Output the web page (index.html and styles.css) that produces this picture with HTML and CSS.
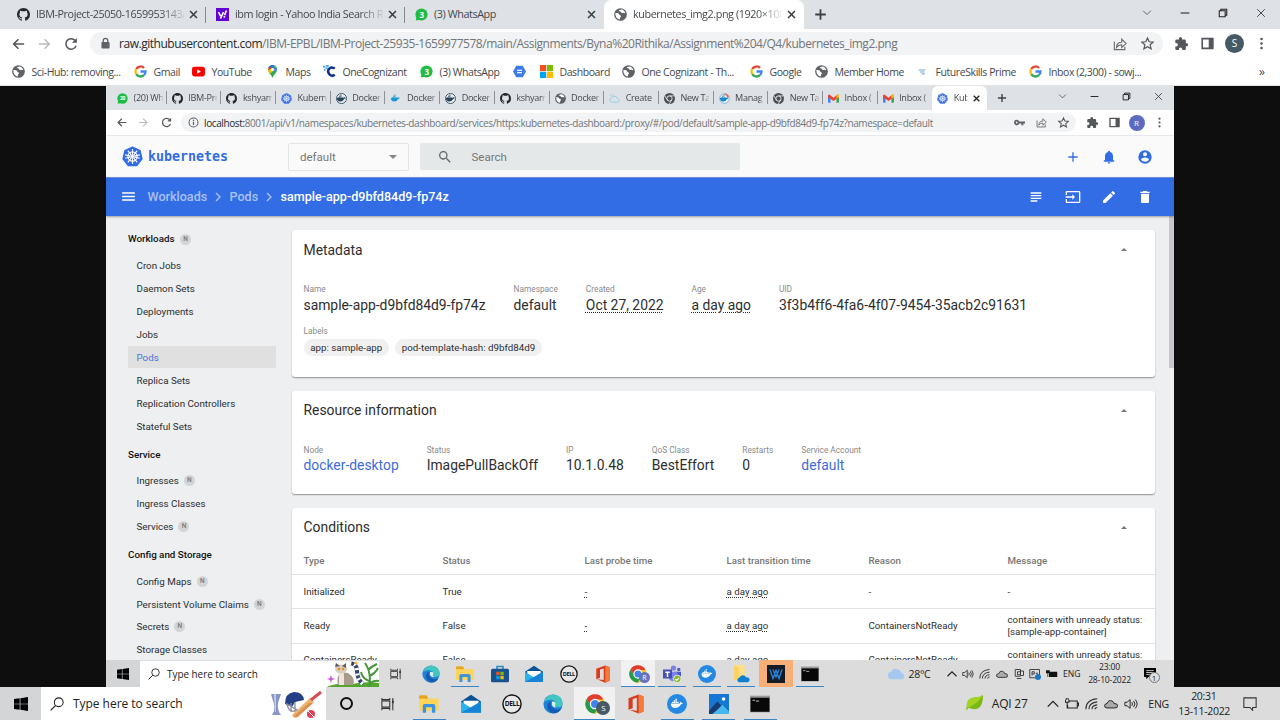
FILE: index.html
```html
<!DOCTYPE html>
<html lang="en">
<head>
<meta charset="utf-8">
<title>kubernetes_img2.png</title>
<link rel="stylesheet" href="styles.css">
</head>
<body>
<svg class="sprite" xmlns="http://www.w3.org/2000/svg">
<symbol id="github" viewBox="0 0 16 16"><path fill="#24292e" d="M8 0C3.58 0 0 3.58 0 8c0 3.54 2.29 6.53 5.47 7.59.4.07.55-.17.55-.38 0-.19-.01-.82-.01-1.49-2.01.37-2.53-.49-2.69-.94-.09-.23-.48-.94-.82-1.13-.28-.15-.68-.52-.01-.53.63-.01 1.08.58 1.23.82.72 1.21 1.87.87 2.33.66.07-.52.28-.87.51-1.07-1.78-.2-3.64-.89-3.64-3.95 0-.87.31-1.59.82-2.15-.08-.2-.36-1.02.08-2.12 0 0 .67-.21 2.2.82a7.6 7.6 0 0 1 4 0c1.53-1.04 2.2-.82 2.2-.82.44 1.1.16 1.92.08 2.12.51.56.82 1.27.82 2.15 0 3.07-1.87 3.75-3.65 3.95.29.25.54.73.54 1.48 0 1.07-.01 1.93-.01 2.2 0 .21.15.46.55.38A8 8 0 0 0 16 8c0-4.42-3.58-8-8-8z"/></symbol>
<symbol id="globe" viewBox="0 0 16 16"><circle cx="8" cy="8" r="7.8" fill="#5f6368"/><path fill="#fff" d="M1.700 6c2 .2 3.200-.2 4 .8.800 1 .3 1.600 1.800 2 1.600.5 1.300 1.800.5 2.300-.8.6-.4 1.900-1 2.900C3.800 13.500 1.500 10.500 1.700 6zM9 1.800c-1.500.6-3 .6-3 1.700 0 1 2.300.4 2.500 1.500.2 1 1.300 1.500 2.300 1 1.200-.5 1.700.5 3 .3C13.400 3.800 11.600 2 9 1.800z"/></symbol>
<symbol id="yahoo" viewBox="0 0 16 16"><path fill="#5f01d1" d="M0 0h16v16H0z"/><path fill="none" stroke="#fff" stroke-width="2" d="M3 5l2.700 5M9.200 5l-3.700 8M12.800 3l-2.300 6"/><circle cx="10.300" cy="10.900" r="1.200" fill="#fff"/></symbol>
<symbol id="wa" viewBox="0 0 16 16"><circle cx="8" cy="8" r="7.500" fill="#1fbc43"/><path fill="#1fbc43" d="M1 15.500l1-5 4 4z"/></symbol>
<symbol id="google" viewBox="0 0 16 16"><g fill="none" stroke-width="2.800"><path stroke="#ea4335" d="M2.700 5A6 6 0 0 1 12.300 3.600"/><path stroke="#fbbc05" d="M2.800 11.200A6.200 6.200 0 0 1 2.700 5"/><path stroke="#34a853" d="M12.200 12.400A6 6 0 0 1 2.800 11.200"/><path stroke="#4285f4" d="M8 8h6.200q0 2.900-2 4.400"/></g></symbol>
<symbol id="youtube" viewBox="0 0 16 12"><rect width="16" height="12" rx="3" fill="#f00"/><path fill="#fff" d="M6.300 3.300v5.400L11 6z"/></symbol>
<symbol id="maps" viewBox="0 0 16 16"><path fill="#34a853" d="M8 16C7 12 2.500 10 2.500 5.500a5.500 5.500 0 0 1 11 0C13.500 10 9 12 8 16z"/><path fill="#4285f4" d="M8 5.500l4-3.800q1.500 1.500 1.500 4L9 8.500z"/><path fill="#1a73e8" d="M4 2A5.500 5.500 0 0 1 10 .4L6.200 5z"/><path fill="#ea4335" d="M2.600 6.500Q2.200 3.500 4 1.900L7 4.400z"/><path fill="#fbbc05" d="M2.600 6.300L6 5l3 2-4.500 4z"/><circle cx="8" cy="5.600" r="2" fill="#fff"/></symbol>
<symbol id="cog" viewBox="0 0 16 16"><path fill="none" stroke="#102c8c" stroke-width="3" d="M14.500 4.500Q11 1.700 8 4.200 4.500 7.500 8 11.500 11 14.500 14.500 12"/><path fill="#3ba0e8" d="M0 1h3v2H0zM3 3h3v2H3zM4 0h3v2H4zM1 5h2v2H1z"/></symbol>
<symbol id="hex" viewBox="0 0 16 16"><path fill="#3b7bea" d="M4 1h8l4 7-4 7H4L0 8z"/><path stroke="#fff" stroke-width="1.500" d="M5 6.700h6M5 9.500h6"/></symbol>
<symbol id="ms" viewBox="0 0 16 16"><path fill="#f25022" d="M0 0h7.600v7.600H0z"/><path fill="#7fba00" d="M8.400 0H16v7.600H8.400z"/><path fill="#00a4ef" d="M0 8.400h7.600V16H0z"/><path fill="#ffb900" d="M8.400 8.400H16V16H8.400z"/></symbol>
<symbol id="future" viewBox="0 0 16 16"><path stroke="#72a5d8" stroke-width="2" d="M1 4h14M4 8h9M7 12h7"/></symbol>
<symbol id="x" viewBox="0 0 16 16"><path fill="none" stroke="currentColor" stroke-width="2.300" d="M3 3l10 10M13 3L3 13"/></symbol>
<symbol id="xthin" viewBox="0 0 16 16"><path fill="none" stroke="#333" stroke-width="1.400" d="M2 2l12 12M14 2L2 14"/></symbol>
<symbol id="plus" viewBox="0 0 16 16"><path fill="none" stroke="currentColor" stroke-width="2.200" d="M8 1.500v13M1.500 8h13"/></symbol>
<symbol id="plusthin" viewBox="0 0 24 24"><path fill="currentColor" d="M19 13h-6v6h-2v-6H5v-2h6V5h2v6h6z"/></symbol>
<symbol id="down" viewBox="0 0 16 16"><path fill="none" stroke="#555" stroke-width="1.500" d="M2 4.500l6 6 6-6"/></symbol>
<symbol id="up" viewBox="0 0 16 16"><path fill="none" stroke="#222" stroke-width="1.500" d="M2 11l6-6 6 6"/></symbol>
<symbol id="min" viewBox="0 0 16 16"><path stroke="#222" stroke-width="1.700" d="M1 8h14"/></symbol>
<symbol id="max" viewBox="0 0 16 16"><path fill="none" stroke="#222" stroke-width="1.700" d="M2 4.500h9.500V14H2zM4.500 4V2H14v9.500h-2"/></symbol>
<symbol id="back" viewBox="0 0 16 16"><path fill="none" stroke="currentColor" stroke-width="1.800" d="M15 8H3M8.500 2.500L3 8l5.500 5.500"/></symbol>
<symbol id="fwd" viewBox="0 0 16 16"><path fill="none" stroke="currentColor" stroke-width="1.600" d="M1 8h12M7.500 2.500L13 8l-5.500 5.500"/></symbol>
<symbol id="reload" viewBox="0 0 16 16"><path fill="none" stroke="#54575b" stroke-width="1.800" d="M13.800 10A6 6 0 1 1 12.700 4"/><path fill="#54575b" d="M14.700 1v5.700H9z"/></symbol>
<symbol id="lock" viewBox="0 0 16 16"><rect x="3" y="6.300" width="10" height="8" rx="1" fill="#5f6368"/><path fill="none" stroke="#5f6368" stroke-width="1.600" d="M5.200 7V4.500a2.800 2.800 0 0 1 5.600 0V7"/></symbol>
<symbol id="info" viewBox="0 0 16 16"><circle cx="8" cy="8" r="6.500" fill="none" stroke="#5f6368" stroke-width="1.500"/><path stroke="#5f6368" stroke-width="1.800" d="M8 7v4.500M8 4v1.700"/></symbol>
<symbol id="share" viewBox="0 0 16 16"><path fill="none" stroke="#6a6d71" stroke-width="1.300" d="M1.500 5v9.500h12V11M4 12q0-6 6-6V2.500l5 5-5 4.500V8.800Q6 8.800 4 12z"/></symbol>
<symbol id="star" viewBox="0 0 16 16"><path fill="none" stroke="#54575b" stroke-width="1.500" d="M8 1.300l2 4.600 5 .4-3.800 3.300 1.200 4.900L8 11.900l-4.400 2.600 1.200-4.900L1 6.300l5-.4z"/></symbol>
<symbol id="puzzle" viewBox="2 1 20 21"><path fill="#54575b" d="M20.500 11H19V7a2 2 0 0 0-2-2h-4V3.500a2.500 2.500 0 0 0-5 0V5H4a2 2 0 0 0-2 2v3.800h1.500a2.700 2.700 0 0 1 0 5.400H2V20a2 2 0 0 0 2 2h3.800v-1.500a2.700 2.700 0 0 1 5.400 0V22H17a2 2 0 0 0 2-2v-4h1.500a2.500 2.500 0 0 0 0-5z"/></symbol>
<symbol id="panel" viewBox="0 0 16 16"><path fill="none" stroke="#54575b" stroke-width="2" d="M1.500 2h13v12h-13z"/><path fill="#54575b" d="M9.500 2H15v12H9.500z"/></symbol>
<symbol id="dots" viewBox="0 0 16 16"><g fill="#54575b"><circle cx="8" cy="2.500" r="1.600"/><circle cx="8" cy="8" r="1.600"/><circle cx="8" cy="13.500" r="1.600"/></g></symbol>
<symbol id="key" viewBox="0 0 16 16"><path fill="#5f6368" fill-rule="evenodd" d="M4 4a4 4 0 1 0 3.700 5.500h3V12h3V9.500H16v-3H7.700A4 4 0 0 0 4 4zm0 2.700a1.300 1.300 0 1 1 0 2.600 1.300 1.300 0 0 1 0-2.600z"/></symbol>
<symbol id="k8s" viewBox="0 0 32 32"><path fill="#326ce5" stroke="#326ce5" stroke-width="2" stroke-linejoin="round" d="M16 1.500L27.500 7l3 12.500-8 10.500h-13l-8-10.500L4.500 7z"/><g fill="none" stroke="#fff" stroke-width="1.700"><circle cx="16" cy="16" r="7"/><path d="M16 4.500v9M16 18.500v9M4.800 13.500l8.500 1.900M18.700 16.700l8.500 2M8.800 25l5.400-7M17.700 14l5.500-7M23.200 25l-5.400-7M14.300 14L8.800 7M27.200 13.500l-8.500 1.900M13.300 16.700l-8.500 2"/></g><circle cx="16" cy="16" r="2.500" fill="#fff"/></symbol>
<symbol id="whale" viewBox="0 0 24 24"><path d="M2 11h14.500q1-.6 0-3 1.500.2 2.300 2 1.700-.3 2.700.7-1 1.800-3.200 1.700Q15.500 18.500 9 18.500 2 18 2 11zM4 8.500h2.300v2H4zM6.800 8.500h2.300v2H6.800zM9.600 8.500h2.300v2H9.600zM12.400 8.500h2.300v2h-2.300zM6.800 6h2.300v2H6.800zM9.600 6h2.300v2H9.600zM9.600 3.500h2.300v2H9.600z" fill="currentColor"/></symbol>
<symbol id="dockdark" viewBox="0 0 24 24"><circle cx="12" cy="12" r="11" fill="#e9edf1" stroke="#38505f" stroke-width="2"/><g color="#27465a"><use href="#whale"/></g></symbol>
<symbol id="dockblue" viewBox="0 0 24 24"><circle cx="12" cy="12" r="12" fill="#2489e4"/><g color="#fff"><use href="#whale" x="3" y="3" width="18" height="18"/></g></symbol>
<symbol id="docklight" viewBox="0 0 24 24"><circle cx="12" cy="12" r="10.500" fill="#eef5fa" stroke="#78b6dc" stroke-width="2"/><path fill="#eb6b52" d="M12 1a11 11 0 0 1 10 7l-4 1q-2-4-6-5z"/><g color="#1688d0"><use href="#whale"/></g></symbol>
<symbol id="cloud" viewBox="0 0 24 24"><path d="M6 19a5 5 0 0 1-.5-9.900A7 7 0 0 1 18.700 11 4 4 0 0 1 19 19z"/></symbol>
<symbol id="create" viewBox="0 0 24 24"><path fill="none" stroke="#93cfe9" stroke-width="2" d="M6 20a4 4 0 0 1 0-9 7 7 0 0 1 13 2 3.500 3.500 0 0 1 0 7zM2 5l5 3M9 2v4"/></symbol>
<symbol id="chromedark" viewBox="0 0 16 16"><circle cx="8" cy="8" r="8" fill="#4c5055"/><circle cx="8" cy="8" r="3.800" fill="#4c5055" stroke="#fff" stroke-width="1.200"/><path fill="none" stroke="#fff" d="M8 4.200h7.300M4.700 10L1.200 4M11.200 10l-3.500 6"/></symbol>
<symbol id="gmail" viewBox="0 0 16 12"><path fill="#4285f4" d="M0 1.500L3.700 4v8H1q-1 0-1-1z"/><path fill="#34a853" d="M16 1.500L12.300 4v8H15q1 0 1-1z"/><path fill="#ea4335" d="M0 1.500Q1-.5 3 1l5 4 5-4q2-1.500 3 .5V4L8 9.500 0 4z"/><path fill="#fbbc04" d="M12.300 1.500Q15-.8 16 1.500V4l-3.700 2z"/></symbol>
<symbol id="bell" viewBox="0 0 24 24"><path fill="#326de6" d="M12 22a2 2 0 0 0 2-2h-4a2 2 0 0 0 2 2zm6-6v-5c0-3.070-1.640-5.640-4.500-6.320V4a1.500 1.500 0 0 0-3 0v.68C7.630 5.360 6 7.920 6 11v5l-2 2v1h16v-1z"/></symbol>
<symbol id="user" viewBox="0 0 24 24"><path fill="#326de6" d="M12 2a10 10 0 1 0 0 20 10 10 0 0 0 0-20zm0 3a3 3 0 1 1 0 6 3 3 0 0 1 0-6zm0 14.200a7.200 7.200 0 0 1-6-3.220c.03-1.990 4-3.080 6-3.080s5.970 1.090 6 3.080a7.200 7.200 0 0 1-6 3.220z"/></symbol>
<symbol id="search" viewBox="0 0 24 24"><path fill="#666" d="M15.500 14h-.79l-.28-.27a6.500 6.500 0 1 0-.7.700l.27.28v.79l5 4.990L20.490 19zm-6 0a4.500 4.500 0 1 1 0-9 4.500 4.500 0 0 1 0 9z"/></symbol>
<symbol id="menu" viewBox="0 0 24 24"><path fill="#fff" d="M3 18h18v-2H3zm0-5h18v-2H3zm0-7v2h18V6z"/></symbol>
<symbol id="logs" viewBox="0 0 24 24"><path fill="#fff" d="M14 17H4v2h10zm6-8H4v2h16zM4 15h16v-2H4zM4 5v2h16V5z"/></symbol>
<symbol id="exec" viewBox="0 0 24 24"><path fill="#fff" d="M21 3.010H3c-1.100 0-2 .9-2 2V9h2V4.990h18v14.030H3V15H1v4.010c0 1.100.9 1.980 2 1.980h18c1.100 0 2-.88 2-1.980v-14c0-1.110-.9-2-2-2zM11 16l4-4-4-4v3H1v2h10z"/></symbol>
<symbol id="edit" viewBox="0 0 24 24"><path fill="#fff" d="M3 17.250V21h3.750L17.810 9.940l-3.750-3.750zM20.710 7.040a1 1 0 0 0 0-1.410l-2.340-2.340a1 1 0 0 0-1.410 0l-1.830 1.830 3.750 3.750z"/></symbol>
<symbol id="trash" viewBox="0 0 24 24"><path fill="#fff" d="M6 19c0 1.100.9 2 2 2h8c1.100 0 2-.9 2-2V7H6zM19 4h-3.500l-1-1h-5l-1 1H5v2h14z"/></symbol>
<symbol id="chev" viewBox="0 0 24 24"><path fill="none" stroke="currentColor" stroke-width="2.700" d="M8 4l8 8-8 8"/></symbol>
<symbol id="win" viewBox="0 0 16 16"><path d="M0 2.300l6.500-.9v6.200H0zM7.300 1.300L16 0v7.600H7.300zM0 8.400h6.500v6.200L0 13.700zM7.300 8.400H16V16l-8.700-1.300z"/></symbol>
<symbol id="mag" viewBox="0 0 16 16"><circle cx="10" cy="6" r="5" fill="none" stroke="#222" stroke-width="1.200"/><path stroke="#222" stroke-width="1.300" d="M6.300 9.700L.7 15.300"/></symbol>
<symbol id="task" viewBox="0 0 16 16"><path fill="none" stroke="#333" stroke-width="1.200" d="M1 4.500h9v7H1zM1 1v2h9V1M1 15v-2h9v2M13.500 1v14"/><path fill="#333" d="M12.500 4h2v3h-2z"/></symbol>
<symbol id="edge" viewBox="0 0 24 24"><circle cx="12" cy="12" r="11.500" fill="#1b83d8"/><path fill="#43c6c0" d="M1 10Q4 .5 13 .6 23 2 23.500 11q-.2 5-6 5-4 0-2.500-3Q16 8 10 7 4 6.500 1 10z"/><path fill="#155bb3" d="M9 9q-5 2-3.500 8 2 5.500 8 6.200Q19 23 22 17.500 18 20 13.500 18 8 15 9 9z"/><path fill="#d8edf5" d="M11 9q4.500-.5 4.200 3-2 3 1.300 4.200-5.500.3-6-4.200z"/></symbol>
<symbol id="folder" viewBox="0 0 24 24"><path fill="#e7a51c" d="M0 3q0-1.500 1.500-1.500H9L11 5v8H0z"/><path fill="#ffd45a" d="M0 5.500h23.500V20H0z"/><path fill="#3b94dd" d="M4.500 22.500v-8q0-2.500 2.500-2.500h10q2.500 0 2.500 2.500v8h-4V16h-7v6.500z"/></symbol>
<symbol id="store" viewBox="0 0 24 24"><path fill="none" stroke="#268ac5" stroke-width="2" d="M8 6V2h8v4"/><rect y="5" width="24" height="18" rx="2" fill="#17528f"/><path fill="#f25022" d="M7 9h4.500v4.500H7z"/><path fill="#7fba00" d="M12.500 9H17v4.500h-4.500z"/><path fill="#00a4ef" d="M7 14.500h4.500V19H7z"/><path fill="#ffb900" d="M12.500 14.500H17V19h-4.500z"/></symbol>
<symbol id="mail" viewBox="0 0 24 24"><path fill="#0a5293" d="M0 9L12 1l12 8v6H0z"/><path fill="#fff" d="M3 8h18v7l-9 4-9-4z"/><path fill="#28b3ed" d="M0 9l12 7.500L24 9v13.500H0z"/><path fill="#1683d5" d="M0 22.500L24 9v13.500z"/></symbol>
<symbol id="dellring" viewBox="0 0 24 24"><circle cx="12" cy="12" r="10.900" fill="#e8e8e8" stroke="#151515" stroke-width="1.700"/></symbol>
<symbol id="office" viewBox="0 0 24 24"><path fill="#da3b1d" fill-rule="evenodd" d="M3 5L15 .5 21 3v18l-6 2.500L4 19l9 1V4.500L8 6v11l-5 2z"/><path fill="#f37b3e" d="M15 .5L21 3v18l-6 2.500z"/></symbol>
<symbol id="chrome" viewBox="0 0 24 24"><circle cx="12" cy="12" r="11.500" fill="#f8c51d"/><path fill="#e33b2e" d="M2 6a11.500 11.500 0 0 1 20 0.500H12l-5 8z"/><path fill="#279b4c" d="M2 6a11.500 11.500 0 0 0 9.500 17.500L17 14H7z"/><circle cx="12" cy="12" r="5.500" fill="#4284ee" stroke="#fff" stroke-width="1.500"/></symbol>
<symbol id="teams" viewBox="0 0 24 24"><circle cx="14" cy="4" r="3.500" fill="#7b83eb"/><circle cx="21" cy="6" r="2.300" fill="#5059c9"/><path fill="#5059c9" d="M16 9h8v7q-3 5-8 2z"/><path fill="#7b83eb" d="M8 9h11v9q-5 7-11 1z"/><path fill="#464eb8" d="M0 6h12v12H0z"/><path stroke="#fff" stroke-width="2" d="M3 9.500h6M6 9.500V16"/><circle cx="19" cy="18.500" r="5" fill="#7eb62c" stroke="#fff"/><path fill="none" stroke="#fff" stroke-width="1.500" d="M16.500 18.500l2 2 3-3.500"/></symbol>
<symbol id="azure" viewBox="0 0 24 24"><path fill="#ffe08a" d="M3 0h14v20H3z"/><path fill="#ffd05b" d="M3 0l6 4v18l-6-3z"/><path fill="#0f80cf" d="M9 23a3.500 3.500 0 0 1 1-6.500 5 5 0 0 1 9 0 3.400 3.400 0 0 1 2 6.500z"/></symbol>
<symbol id="wicon" viewBox="0 0 24 24"><path fill="#161c26" d="M0 0h24v24H0z"/><path fill="none" stroke="#2b86e0" stroke-width="1.700" d="M4 6l4 12 4-11 4 11 4-12M8 6l4 10 4-10"/></symbol>
<symbol id="cmd" viewBox="0 0 24 20"><path fill="#9a9a9a" d="M0 0h24v20H0z"/><path fill="#080808" d="M.7 2.500h22.600v16.800H.7z"/><path stroke="#ddd" d="M3 5.500h3M7 6.500h4"/></symbol>
<symbol id="photo" viewBox="0 0 24 24"><path fill="#1477d4" d="M0 0h24v24H0z"/><path fill="#173b70" d="M0 20L10 9l14 15H0z"/><path fill="#49b7ef" d="M10 19l6-6 8 8v3H4z"/><circle cx="17.500" cy="6" r="2.200" fill="#fff"/></symbol>
<symbol id="speaker" viewBox="0 0 16 16"><path fill="none" stroke="#222" stroke-width="1.100" d="M1 6h2.500L7 3v10L3.500 10H1zM9 6q1.500 2 0 4M11 4.500q3 3.500 0 7M13 3q4 5 0 10"/></symbol>
<symbol id="wifi" viewBox="0 0 16 16"><path fill="none" stroke="#333" stroke-width="1.300" d="M1 14Q1 3 14 2M4.500 14Q4.500 6.500 14 5.500M8 14q0-4.500 6-5M11.500 14q0-2 2.500-2"/></symbol>
<symbol id="tcloud" viewBox="0 0 16 16"><path fill="#aaa" stroke="#222" stroke-width="1.100" d="M3.500 12.500Q.5 12.500.6 9.500q.8-2 2.900-2Q5 3 9 4.500q2.500 1 2.500 3 4-.3 4 2.500t-3 2.500z"/></symbol>
<symbol id="usb" viewBox="0 0 16 16"><path fill="none" stroke="#333" stroke-width="1.200" d="M3 2h7v2M3 2v9h7M10 4h4v6h-4zM5 14h6M6 5h4v4H6z"/></symbol>
<symbol id="ps" viewBox="0 0 16 16"><path fill="none" stroke="#333" stroke-width="1.200" d="M1 2h13v11H1zM4 10V5h3v3H4M9 7h3"/><circle cx="12" cy="12" r="4" fill="#1976c8"/></symbol>
<symbol id="batt" viewBox="0 0 16 16"><path fill="#111" d="M4 5h11v7H4zM0 3h5v4H0zM2 7h1v5H2z"/></symbol>
<symbol id="batt2" viewBox="0 0 16 16"><path fill="none" stroke="#222" stroke-width="1.200" d="M5 4.500h9v8H3V9M14.500 7h1v3h-1M.5 3v3h4V3M2.500 6v7M1.500 1v2M3.500 1v2"/></symbol>
<symbol id="note" viewBox="0 0 16 16"><path fill="none" stroke="#333" stroke-width="1.200" d="M1 1h14v11h-4v3.200L8 12H1z"/></symbol>
<symbol id="notef" viewBox="0 0 16 16"><path fill="#000" d="M0 0h16v12H6l-3 3v-3H0z"/><path stroke="#fff" d="M3 3.500h10M3 6h10M3 8.500h7"/></symbol>
<symbol id="leaf" viewBox="0 0 24 24"><path fill="#79b913" d="M1 17Q0 4 13 3q6 .5 11-3 0 20-12 20-5 0-8-2l-4 4z"/><path fill="#a2d222" d="M1 17Q0 4 13 3q6 .5 11-3Q17 12 3 18z"/></symbol>
</svg>

<header class="chrome">
  <div class="tabs">
    <div class="tab"><svg><use href="#github"/></svg><span class="title fade">IBM-Project-25050-1659953143/I</span><svg class="close"><use href="#x"/></svg></div>
    <div class="tab"><svg><use href="#yahoo"/></svg><span class="title fade">ibm login - Yahoo India Search Re</span><svg class="close"><use href="#x"/></svg></div>
    <div class="tab nosep"><span class="wa"><svg><use href="#wa"/></svg><b>3</b></span><span class="title">(3) WhatsApp</span><svg class="close"><use href="#x"/></svg></div>
    <div class="tab active"><svg><use href="#globe"/></svg><span class="title fade">kubernetes_img2.png (1920×108</span><svg class="close"><use href="#x"/></svg></div>
    <svg class="newtab"><use href="#plus"/></svg>
    <div class="wincontrols"><svg><use href="#down"/></svg><svg><use href="#min"/></svg><svg><use href="#max"/></svg><svg><use href="#xthin"/></svg></div>
  </div>
  <div class="toolbar">
    <div class="nav"><svg class="dark"><use href="#back"/></svg><svg class="light"><use href="#fwd"/></svg><svg><use href="#reload"/></svg></div>
    <div class="omni"><svg><use href="#lock"/></svg><span class="url"><b>raw.githubusercontent.com</b>/IBM-EPBL/IBM-Project-25935-1659977578/main/Assignments/Byna%20Rithika/Assignment%204/Q4/kubernetes_img2.png</span><svg class="push"><use href="#share"/></svg><svg><use href="#star"/></svg></div>
    <div class="tools"><svg><use href="#puzzle"/></svg><svg><use href="#panel"/></svg><span class="avatar">S</span><svg><use href="#dots"/></svg></div>
  </div>
  <nav class="bookmarks">
    <a><svg><use href="#globe"/></svg>Sci-Hub: removing...</a>
    <a><svg><use href="#google"/></svg>Gmail</a>
    <a><svg><use href="#youtube"/></svg>YouTube</a>
    <a><svg><use href="#maps"/></svg>Maps</a>
    <a><svg><use href="#cog"/></svg>OneCognizant</a>
    <a><span class="wa"><svg><use href="#wa"/></svg><b>3</b></span>(3) WhatsApp</a>
    <a><svg><use href="#hex"/></svg></a>
    <a><svg><use href="#ms"/></svg>Dashboard</a>
    <a><svg><use href="#globe"/></svg>One Cognizant - Th...</a>
    <a><svg><use href="#google"/></svg>Google</a>
    <a><svg><use href="#globe"/></svg>Member Home</a>
    <a class="fs"><svg><use href="#future"/></svg>FutureSkills Prime</a>
    <a><svg><use href="#google"/></svg>Inbox (2,300) - sowj...</a>
    <span class="more">»</span>
  </nav>
</header>

<div class="viewer">
<div class="desktop">
  <div class="itabs">
    <div class="itab"><span class="wa"><svg><use href="#wa"/></svg><b>20</b></span><span class="fade">(20) Wh</span></div>
    <div class="itab"><svg><use href="#github"/></svg><span class="fade">IBM-Pro</span></div>
    <div class="itab"><svg><use href="#github"/></svg><span class="fade">kshyam</span></div>
    <div class="itab"><svg><use href="#k8s"/></svg><span class="fade">Kubern</span></div>
    <div class="itab"><svg><use href="#dockdark"/></svg><span class="fade">Docker</span></div>
    <div class="itab"><svg class="whale"><use href="#whale"/></svg><span class="fade">Docker</span></div>
    <div class="itab"><svg><use href="#dockdark"/></svg><span class="fade">Docker</span></div>
    <div class="itab"><svg><use href="#github"/></svg><span class="fade">kshyam</span></div>
    <div class="itab"><svg><use href="#globe"/></svg><span class="fade">Docker</span></div>
    <div class="itab"><svg><use href="#create"/></svg><span class="fade">Create</span></div>
    <div class="itab"><svg><use href="#chromedark"/></svg><span class="fade">New Ta</span></div>
    <div class="itab"><svg><use href="#docklight"/></svg><span class="fade">Manag</span></div>
    <div class="itab"><svg><use href="#chromedark"/></svg><span class="fade">New Ta</span></div>
    <div class="itab"><svg><use href="#gmail"/></svg><span class="fade">Inbox (</span></div>
    <div class="itab nosep"><svg><use href="#gmail"/></svg><span class="fade">Inbox (</span></div>
    <div class="itab iactive"><svg><use href="#k8s"/></svg><span class="fade">Kub</span><svg class="close"><use href="#x"/></svg></div>
    <svg class="newtab"><use href="#plus"/></svg>
    <div class="wincontrols"><svg><use href="#down"/></svg><svg><use href="#min"/></svg><svg><use href="#max"/></svg><svg><use href="#xthin"/></svg></div>
  </div>
  <div class="toolbar small">
    <div class="nav"><svg class="dark"><use href="#back"/></svg><svg class="light"><use href="#fwd"/></svg><svg><use href="#reload"/></svg></div>
    <div class="omni"><svg><use href="#info"/></svg><span class="url"><b>localhost:</b>8001/api/v1/namespaces/kubernetes-dashboard/services/https:kubernetes-dashboard:/proxy/#/pod/default/sample-app-d9bfd84d9-fp74z?namespace=default</span><svg class="push"><use href="#key"/></svg><svg><use href="#share"/></svg><svg><use href="#star"/></svg></div>
    <div class="tools"><svg><use href="#puzzle"/></svg><svg><use href="#panel"/></svg><span class="avatar">R</span><svg><use href="#dots"/></svg></div>
  </div>
  <div class="khead">
    <svg class="logo"><use href="#k8s"/></svg><span class="brand">kubernetes</span>
    <div class="select">default<i></i></div>
    <div class="ksearch"><svg><use href="#search"/></svg>Search</div>
    <div class="kactions"><svg class="kplus"><use href="#plusthin"/></svg><svg><use href="#bell"/></svg><svg><use href="#user"/></svg></div>
  </div>
  <div class="kbar">
    <svg class="burger"><use href="#menu"/></svg><span class="c1">Workloads</span><svg class="sep"><use href="#chev"/></svg><span class="c2">Pods</span><svg class="sep"><use href="#chev"/></svg><span class="cur">sample-app-d9bfd84d9-fp74z</span>
    <div class="kactions"><svg><use href="#logs"/></svg><svg><use href="#exec"/></svg><svg><use href="#edit"/></svg><svg><use href="#trash"/></svg></div>
  </div>
  <div class="kmain">
    <aside>
      <h4>Workloads <i>N</i></h4>
      <a>Cron Jobs</a><a>Daemon Sets</a><a>Deployments</a><a>Jobs</a><a class="sel">Pods</a><a>Replica Sets</a><a>Replication Controllers</a><a>Stateful Sets</a>
      <h4>Service</h4>
      <a>Ingresses <i>N</i></a><a>Ingress Classes</a><a>Services <i>N</i></a>
      <h4>Config and Storage</h4>
      <a>Config Maps <i>N</i></a><a>Persistent Volume Claims <i>N</i></a><a>Secrets <i>N</i></a><a>Storage Classes</a>
    </aside>
    <main>
      <section class="card meta">
        <h3>Metadata<i></i></h3>
        <div class="props">
          <div><small>Name</small>sample-app-d9bfd84d9-fp74z</div>
          <div><small>Namespace</small>default</div>
          <div><small>Created</small><u>Oct 27, 2022</u></div>
          <div><small>Age</small><u>a day ago</u></div>
          <div><small>UID</small>3f3b4ff6-4fa6-4f07-9454-35acb2c91631</div>
        </div>
        <div class="labels"><small>Labels</small><div class="chips"><span class="chip">app: sample-app</span><span class="chip">pod-template-hash: d9bfd84d9</span></div></div>
      </section>
      <section class="card res">
        <h3>Resource information<i></i></h3>
        <div class="props">
          <div class="link"><small>Node</small>docker-desktop</div>
          <div><small>Status</small>ImagePullBackOff</div>
          <div><small>IP</small>10.1.0.48</div>
          <div><small>QoS Class</small>BestEffort</div>
          <div><small>Restarts</small>0</div>
          <div class="link"><small>Service Account</small>default</div>
        </div>
      </section>
      <section class="card cond">
        <h3>Conditions<i></i></h3>
        <div class="row head"><span>Type</span><span>Status</span><span>Last probe time</span><span>Last transition time</span><span>Reason</span><span>Message</span></div>
        <div class="row"><span>Initialized</span><span>True</span><span><u>-</u></span><span><u>a day ago</u></span><span>-</span><span>-</span></div>
        <div class="row"><span>Ready</span><span>False</span><span><u>-</u></span><span><u>a day ago</u></span><span>ContainersNotReady</span><span>containers with unready status:<br>[sample-app-container]</span></div>
        <div class="row"><span>ContainersReady</span><span>False</span><span><u>-</u></span><span><u>a day ago</u></span><span>ContainersNotReady</span><span class="first">containers with unready status:</span></div>
      </section>
    </main>
    <div class="scroll"></div>
  </div>
  <div class="taskbar inner">
    <div class="start"><svg><use href="#win"/></svg></div>
    <div class="tsearch"><svg class="mag"><use href="#mag"/></svg>Type here to search
      <svg class="art" viewBox="0 0 54 27"><path fill="#55a630" d="M0 27q10-6 27-4 14-3 27-1v5z"/><path fill="none" stroke="#46973b" stroke-width="2" d="M44 27Q47 12 40 2M44 15q6-2 9-8M44 20q-7-3-8-9M45 22q5-3 9-2M43 9q4-4 9-6"/><path fill="none" stroke="#344270" stroke-width="4" d="M24 2q8 0 8 8t6 13"/><path fill="none" stroke="#fff" stroke-width="4" stroke-dasharray="2 3" d="M24 2q8 0 8 8t6 13"/><path fill="#aa9c8c" d="M13 24q-2-9 3-13l7 1q8 5 5 12z"/><path fill="#ede6dc" d="M14 12h5v12h-5z"/><ellipse cx="16" cy="8" rx="6" ry="4.500" fill="#d8cec2"/><path fill="#625b5b" d="M10 6l1-4 4 3zM17 5l4-3v5z"/><circle cx="14" cy="8" r="1.300" fill="#e58d25"/><circle cx="18" cy="8" r="1.300" fill="#e58d25"/><path fill="#c957dc" d="M6 14l1 3 3 1-3 1-1 3-1-3-3-1 3-1z"/><circle cx="31" cy="2" r="1.500" fill="#f5b626"/></svg>
    </div>
    <div class="apps">
      <span class="tv"><svg><use href="#task"/></svg></span><span><svg><use href="#edge"/></svg></span><span class="open"><svg><use href="#folder"/></svg></span><span><svg><use href="#store"/></svg></span><span><svg><use href="#mail"/></svg></span><span class="dell"><svg><use href="#dellring"/></svg><b>DELL</b></span><span><svg><use href="#office"/></svg></span><span class="open lit"><svg><use href="#chrome"/></svg><em>R</em></span><span class="open"><svg><use href="#teams"/></svg></span><span class="open"><svg><use href="#dockblue"/></svg></span><span class="open"><svg><use href="#azure"/></svg></span><span class="warn"><svg><use href="#wicon"/></svg></span><span class="open"><svg><use href="#cmd"/></svg></span>
    </div>
    <div class="tray"><svg class="weather"><use href="#cloud"/></svg><span class="temp">28°C</span><svg><use href="#up"/></svg><svg><use href="#speaker"/></svg><svg><use href="#wifi"/></svg><svg><use href="#tcloud"/></svg><svg><use href="#usb"/></svg><svg><use href="#ps"/></svg><svg><use href="#batt"/></svg><span class="lang">ENG</span><span class="clock">23:00<br>28-10-2022</span><span class="notif"><svg><use href="#notef"/></svg><em>1</em></span></div>
  </div>
</div>
</div>

<footer class="taskbar outer">
  <div class="start"><svg><use href="#win"/></svg></div>
  <div class="tsearch"><svg class="mag"><use href="#mag"/></svg>Type here to search
    <svg class="art" viewBox="0 0 54 30"><path fill="#8795c5" d="M1 5h10l-3 9q-1 4 1 9l2 3H2l2-4q1-6-1-10z"/><path fill="#c5cce5" d="M4 5h2v18H5z"/><path fill="#253f87" d="M15 15Q15 4 24 3q9 0 10 8l-9 2-3 5z"/><path fill="none" stroke="#8a8fa0" stroke-width="1.300" d="M17 15l10 6q-8 4-10-6zM21 14v9M25 13v10"/><path fill="#efb06d" d="M22 26L40 9l4 4-16 15q-4 2-6-2z"/><path stroke="#d84d53" stroke-width="3" d="M41 11L51 3"/><path fill="#d99051" d="M23 28l16-14 4 0-16 14z"/><circle cx="41" cy="25" r="4" fill="#db4057"/><path stroke="#fff" d="M38 22l6 6"/></svg>
  </div>
  <div class="apps">
    <span><b class="ring"></b></span><span class="tv"><svg><use href="#task"/></svg></span><span class="open"><svg><use href="#folder"/></svg></span><span><svg><use href="#mail"/></svg></span><span class="dell"><svg><use href="#dellring"/></svg><b>DELL</b></span><span><svg><use href="#edge"/></svg></span><span class="open lit"><svg><use href="#chrome"/></svg><em>S</em></span><span><svg><use href="#office"/></svg></span><span class="open"><svg><use href="#dockblue"/></svg></span><span class="open"><svg><use href="#photo"/></svg></span><span class="open"><svg><use href="#cmd"/></svg></span>
  </div>
  <div class="tray"><svg class="weather"><use href="#leaf"/></svg><span class="temp">AQI 27</span><svg><use href="#up"/></svg><svg><use href="#batt2"/></svg><svg><use href="#wifi"/></svg><svg><use href="#tcloud"/></svg><svg><use href="#speaker"/></svg><span class="lang">ENG</span><span class="clock">20:31<br>13-11-2022</span><span class="notif"><svg><use href="#note"/></svg></span></div>
</footer>
</body>
</html>
```
FILE: styles.css
```css
* { box-sizing: border-box; }
body { margin: 0; width: 1280px; height: 720px; overflow: hidden; font-family: "Open Sans", "Noto Sans", sans-serif; color: #45494d; display: flex; flex-direction: column; background: #0e0e0e; white-space: nowrap; }
.sprite { display: none; }
svg { flex: none; width: 13px; height: 13px; }
i, em { font-style: normal; }
.fade { overflow: hidden; mask-image: linear-gradient(to right, #000 84%, #0002); }
.wa { position: relative; display: flex; flex: none; }
.wa b { position: absolute; inset: 0; text-align: center; color: #fff; font: bold 8px/13px "Open Sans", sans-serif; }

.chrome { height: 86px; background: #fff; border-bottom: 1px solid #e2e4e6; }
.tabs { height: 29px; background: #dee1e6; display: flex; padding-left: 7px; align-items: center; }
.tab { width: 199px; height: 28px; padding: 0 7px 0 10px; display: flex; align-items: center; font-size: 10.800px; letter-spacing: -.42px; position: relative; }
.tab:not(.nosep):not(.active)::after { content: ""; position: absolute; right: 0; top: 6px; width: 1px; height: 16px; background: #85888c; }
.title { margin-left: 6px; width: 148px; line-height: 20px; margin-top: -1px; }
.tab .close { width: 11px; height: 11px; margin-left: auto; color: #3c4043; }
.tab.active { background: #fff; border-radius: 7px 7px 0 0; height: 29px; width: 200px; }
.newtab { width: 13px; height: 13px; margin-left: 10px; color: #3c4043; }
.wincontrols { margin-left: auto; display: flex; gap: 28px; padding-right: 14px; }
.wincontrols svg { width: 10px; height: 10px; margin-top: -3px; }

.toolbar { height: 29px; display: flex; align-items: center; background: #fff; }
.nav { width: 90px; display: flex; gap: 12.500px; padding-left: 11px; color: #54575b; }
.nav svg { width: 14px; height: 14px; }
.nav .light { color: #b8babd; }
.omni { width: 1073px; height: 23px; border-radius: 12px; background: #f1f3f4; display: flex; align-items: center; padding: 0 9px; gap: 14px; }
.omni .url { margin-left: -7px; font-size: 12px; letter-spacing: -.47px; color: #72767a; }
.url b { font-weight: 400; color: #27292c; }
.push { margin-left: auto; }
.omni > .push { width: 14px; height: 14px; }
.tools { display: flex; align-items: center; gap: 13px; padding-left: 12px; }
.tools .avatar { width: 19px; height: 19px; border-radius: 50%; background: #455a64; color: #fff; font-size: 10px; line-height: 19px; text-align: center; margin: 0 -2px; }

.bookmarks { height: 27px; display: grid; grid-template-columns: 122px 58px 74px 57px 97px 93px 27px 82px 128px 65px 103px 111px 230px auto; padding-left: 12px; font-size: 10.500px; letter-spacing: -.42px; align-items: center; }
.bookmarks a { display: flex; align-items: center; gap: 6.500px; height: 25px; }
.bookmarks svg { width: 13px; height: 13px; }
.bookmarks .fs svg { width: 8px; height: 8px; margin: 0 3px 0 0; }
.more { font-size: 12px; }

.viewer { height: 601px; background: #0e0e0e; display: flex; justify-content: center; }
.desktop { width: 1068px; height: 601px; display: flex; flex-direction: column; background: #edeff0; }
.itabs { height: 24px; background: #dee1e6; display: flex; align-items: center; padding-left: 6px; }
.itab { flex: none; width: 54.700px; height: 24px; display: flex; align-items: center; padding-left: 5px; gap: 5.500px; font-size: 9.100px; letter-spacing: -.3px; position: relative; }
.itab svg { width: 11px; height: 11px; }
.itab .fade { width: 29px; line-height: 14px; }
.itab .wa b { font-size: 5px; line-height: 11px; }
.whale { color: #1597d5; }
.itab:not(.nosep):not(.iactive)::after { content: ""; position: absolute; right: 0; top: 5px; width: 1px; height: 13px; background: #8f9296; }
.iactive { background: #fff; border-radius: 6px 6px 0 0; }
.iactive .fade { width: 14px; }
.iactive .close { width: 9px; height: 9px; color: #222; margin-left: -1.500px; }
.itabs .newtab { width: 10px; height: 10px; margin-left: 10px; }
.itabs .wincontrols { gap: 23px; padding-right: 11.500px; }
.itabs .wincontrols svg { width: 9px; height: 9px; margin-top: -3px; }

.small { height: 26px; border-bottom: 1px solid #e6e8e9; }
.small svg { width: 11px; height: 11px; }
.small .nav { width: 75px; gap: 11.500px; padding-left: 9.500px; }
.small .omni { width: 895px; height: 19px; padding: 0 7px; gap: 11px; }
.small .omni > .push { width: 11px; height: 11px; }
.small .url { font-size: 10px; letter-spacing: -.385px; margin-left: -6px; }
.small .tools { gap: 11px; padding-left: 10.500px; }
.small .avatar { width: 16px; height: 16px; line-height: 16px; font-size: 8px; background: #5c6bc0; margin: 0 -2px; }

.khead, .kbar, .kmain { font-family: Roboto, sans-serif; }
.khead { height: 41px; background: #fafafa; display: flex; align-items: center; padding-left: 16px; flex: none; color: #777; font-size: 11.500px; }
.logo { width: 21px; height: 21px; }
.brand { margin-left: 5px; width: 80px; font: bold 13.300px "DejaVu Sans Mono", monospace; color: #326de6; }
.select { margin-left: 60px; width: 121px; height: 28px; border: 1px solid #e3e4e5; border-radius: 2px; padding: 0 11px; display: flex; align-items: center; justify-content: space-between; }
.select i { border: 4px solid transparent; border-top-color: #858585; border-bottom: 0; }
.ksearch { margin-left: 11px; width: 320px; height: 27px; background: #e4e8e8; border-radius: 2px; display: flex; align-items: center; padding-left: 17px; gap: 18.500px; }
.ksearch svg, .kactions svg { width: 16px; height: 16px; }
.kactions { margin-left: auto; padding-right: 21px; display: flex; gap: 20.200px; align-items: center; }
.kactions .kplus { color: #326de6; }
.kbar { height: 39px; background: #326de6; border-top: 1px solid #6c8ed8; display: flex; align-items: center; padding-left: 14px; padding-bottom: 1px; flex: none; color: #fff; font-size: 12.580px; font-weight: 500; box-shadow: 0 1px 2px #0005; z-index: 1; }
.burger { width: 17px; height: 17px; }
.kbar .c1, .kbar .c2 { color: #a9c1f4; }
.c1 { margin-left: 10.500px; width: 59px; }
.c2 { width: 28px; }
.sep { width: 12px; height: 12px; margin: 0 5.500px; color: #a9c1f4; }

.kmain { height: 444px; flex: none; display: flex; overflow: hidden; background: #edeff0; color: #2c2e30; }
aside { width: 186px; padding: 10.700px 16.500px 0 22px; font-size: 9.800px; }
aside h4 { margin: 0; height: 24px; font-size: 9.800px; font-weight: 500; line-height: 23px; color: #111; margin-bottom: 3.700px; }
aside a + h4 { margin-top: 5px; height: 23px; margin-bottom: 3.800px; }
aside a { display: flex; align-items: center; height: 22.900px; padding-left: 8.500px; }
aside .sel { background: #e0e0e0; color: #4a73e0; height: 22.500px; margin-bottom: .4px; }
aside i { display: inline-block; width: 11px; height: 11px; border-radius: 50%; background: #d2d4d5; color: #777; font-size: 6.500px; font-weight: 500; line-height: 11px; text-align: center; margin-left: 5px; vertical-align: 1px; }
aside h4 i { margin-left: 3px; }
main { width: 862.500px; padding-top: 14px; }
.card { background: #fff; border-radius: 3px; box-shadow: 0 1px 1.500px #0006; margin-bottom: 14px; padding: 0 11px 0 11.500px; }
.meta { height: 146.500px; }
.res { height: 103px; }
.cond { height: 200px; padding: 0; }
h3 { margin: 0; height: 39px; display: flex; justify-content: space-between; align-items: center; font-size: 13.900px; font-weight: 400; padding-right: 17px; }
h3 i { border: 3px solid transparent; border-bottom-color: #777; border-top: 0; }
.cond h3 { padding: 0 28px 0 11.500px; }
.props { display: flex; gap: 28px; padding-top: 15px; font-size: 13.870px; line-height: 16px; height: 57px; }
small { display: block; font-size: 8.300px; line-height: 11px; color: #8a8a8a; margin-bottom: 1.500px; }
u { text-decoration: underline dotted 1px; text-underline-offset: 2px; }
.link { color: #3e6be0; }
.chips { display: flex; gap: 6px; }
.chip { height: 17.500px; border-radius: 9px; background: #f0f0f0; font-size: 9.750px; line-height: 18px; padding: 0 6.800px; }
.row { display: grid; grid-template-columns: 139px 142px 142px 142px 139px 1fr; align-items: center; height: 34.300px; padding-left: 11.500px; border-bottom: 1px solid #e3e3e3; font-size: 9.720px; line-height: 11.500px; }
.first { align-self: start; padding-top: 5px; }
.head { height: 28.500px; font-weight: 500; color: #777; }
.scroll { width: 5.500px; height: 152px; margin-left: auto; background: #c6c8cb; }

.taskbar { display: flex; background: #dcdcdc; color: #222; }
.start { display: flex; align-items: center; justify-content: center; background: #d3d5d7; }
.tsearch { background: #fff; display: flex; align-items: center; }
.art { margin-left: auto; }
.apps { display: flex; }
.apps span { display: flex; align-items: center; justify-content: center; position: relative; }
.apps .open::after { content: ""; position: absolute; left: 10%; right: 10%; bottom: 0; height: 1.500px; background: #3886c6; }
.apps .lit { background: #f1f1f1; }
.apps .lit::after { left: 0; right: 0; }
.apps .warn { background: #f7ae77; }
.apps em { position: absolute; border-radius: 50%; color: #fff; text-align: center; }
.dell b { position: absolute; letter-spacing: -.3px; color: #111; }
.tray { display: flex; align-items: center; position: relative; }
.clock { text-align: center; }
.notif { position: relative; display: flex; }

.inner { height: 27px; flex: none; font-size: 9.900px; }
.inner .start { width: 34px; }
.inner .start svg { width: 12px; height: 12px; }
.inner .tsearch { width: 239px; padding-left: 8px; border-top: 1px solid #ddd; }
.inner .mag { width: 12px; height: 12px; margin-right: 7px; }
.inner .art { width: 54px; height: 27px; }
.inner .apps span { width: 34.500px; }
.inner .apps svg { width: 18px; height: 18px; }
.inner .apps .tv svg { width: 12px; height: 12px; }
.inner .apps em { right: 5px; top: 12px; width: 11px; height: 11px; background: #6673bd; font-size: 7px; line-height: 11px; }
.inner .dell b { font-size: 5.500px; }
.inner .tray { width: 346px; padding-left: 59px; font-size: 8.600px; }
.inner .tray svg { width: 12px; height: 12px; margin-right: 4.800px; }
.inner .tray .weather { width: 18px; height: 18px; margin-right: 4px; fill: #a5c8f1; }
.inner .temp { width: 37px; font-size: 10.500px; letter-spacing: -.3px; }
.inner .lang { width: 24.500px; margin-left: 0; }
.inner .clock { width: 44px; line-height: 12.800px; letter-spacing: -.2px; }
.inner .notif { margin-left: 12px; }
.inner .notif svg { margin: 0; }
.inner .notif em { position: absolute; left: 5px; top: 4px; width: 11px; height: 11px; border: 1px solid #777; border-radius: 50%; background: #dedede; font-size: 8px; line-height: 9px; text-align: center; }

.outer { height: 33px; font-size: 12px; }
.outer .start { width: 41px; }
.outer .start svg { width: 14px; height: 14px; }
.outer .tsearch { width: 285px; padding-left: 9px; letter-spacing: -.04px; }
.outer .mag { width: 14px; height: 14px; margin-right: 9px; }
.outer .art { width: 54px; height: 30px; margin-right: 2px; }
.outer .apps span { width: 41.350px; }
.outer .apps svg { width: 20px; height: 20px; }
.outer .apps .tv svg { width: 14px; height: 14px; }
.ring { width: 13px; height: 13px; border: 2px solid #111; border-radius: 50%; }
.outer .apps em { right: 5px; top: 14px; width: 14px; height: 14px; background: #455a64; font-size: 8px; line-height: 14px; }
.outer .dell b { font-size: 6.500px; }
.outer .tray { flex: 1; padding-left: 185px; font-size: 10.500px; }
.outer .tray svg { width: 14px; height: 14px; margin-right: 5.500px; }
.outer .tray .weather { width: 17px; height: 17px; margin-right: 9px; }
.outer .temp { width: 54px; font-size: 12px; letter-spacing: -.2px; }
.outer .lang { width: 30px; margin-left: 5px; letter-spacing: -.2px; }
.outer .clock { width: 51px; line-height: 15px; letter-spacing: -.3px; }
.outer .notif { margin-left: 14px; }
```
